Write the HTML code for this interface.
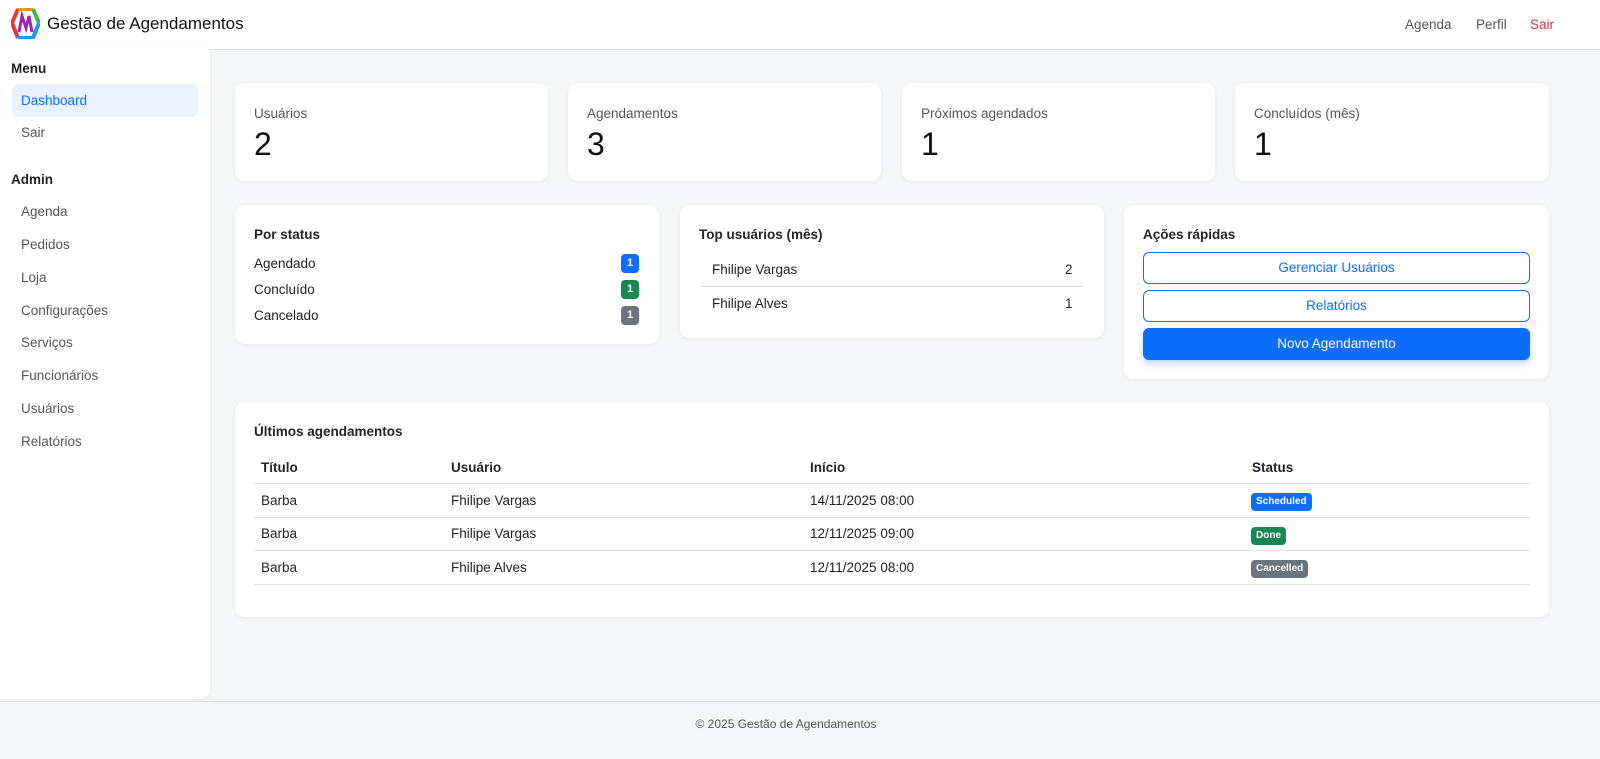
<!DOCTYPE html><html><head><meta charset="utf-8"><style>
*{box-sizing:border-box;margin:0;padding:0}
body{width:1600px;height:759px;background:#f5f6f8;font-family:"Liberation Sans",sans-serif;color:#212529;position:relative;overflow:hidden;font-size:13.5px}
.hdr{position:absolute;left:0;top:0;width:1600px;height:50px;background:#fff;border-bottom:1px solid #dee2e6}
.brand{position:absolute;left:47px;top:14px;font-size:17px;color:#111}
.nav{position:absolute;top:17px;font-size:13.5px;color:#555}
.side{position:absolute;left:0;top:44px;width:210px;height:655px;background:#fff;border-radius:0 10px 10px 0;box-shadow:0 1px 4px rgba(0,0,0,.06)}
.side h4{position:absolute;left:11px;font-size:13.5px;font-weight:bold;color:#222}
.side a{position:absolute;left:21px;font-size:13.5px;color:#555}
.act{position:absolute;left:12px;top:40px;width:186px;height:33px;background:#e7f1ff;border-radius:6px}
.card{position:absolute;background:#fff;border-radius:10px;box-shadow:0 1px 4px rgba(0,0,0,.06)}
.lbl{position:absolute;left:19px;top:23px;font-size:13.5px;color:#555}
.num{position:absolute;left:19px;top:43px;font-size:32px;color:#111}
.t{position:absolute;left:19px;top:22px;font-size:13.5px;font-weight:bold}
.row{position:absolute;left:19px;font-size:13.5px;color:#222}
.bd{position:absolute;width:18px;height:19px;border-radius:4px;color:#fff;font-size:11px;font-weight:bold;text-align:center;line-height:19px}
.btn{position:absolute;left:19px;width:387px;height:32px;border:1px solid #0d6efd;border-radius:6px;color:#0d6efd;text-align:center;line-height:30px;font-size:13.5px}
.th{position:absolute;top:58px;font-weight:bold;font-size:13.5px}
.td{position:absolute;font-size:13.5px;color:#222}
.hl{position:absolute;left:19px;width:1276px;height:1px;background:#dee2e6}
.sb{position:absolute;left:1016px;height:18px;border-radius:4px;color:#fff;font-size:10px;font-weight:bold;line-height:18px;padding:0 5px}
</style></head><body>
<div class="hdr">
<svg style="position:absolute;left:11px;top:8px" width="29" height="31" viewBox="0 0 29 31"><polygon points="7,1 22,1 28,15 22,30 7,30 1,15" fill="#fff" stroke="none"/><path d="M7 1 L1 15 L7 30" stroke="#e53935" stroke-width="4" fill="none"/><path d="M7 1 H22" stroke="#ff9800" stroke-width="4"/><path d="M22 1 L28 15" stroke="#4caf50" stroke-width="4"/><path d="M28 15 L22 30 H7" stroke="#2196f3" stroke-width="4" fill="none"/><path d="M8 24 L11 8 L15 20 L18 8 L21 24" stroke="#9c27b0" stroke-width="3" fill="none"/></svg>
<div class="brand">Gestão de Agendamentos</div>
<div class="nav" style="left:1405px">Agenda</div><div class="nav" style="left:1476px">Perfil</div><div class="nav" style="left:1530px;color:#dc3545">Sair</div>
</div>
<div class="side"><div class="act"></div>
<h4 style="top:17px">Menu</h4><a style="top:49px;color:#0d6efd">Dashboard</a><a style="top:81px">Sair</a>
<h4 style="top:128px">Admin</h4><a style="top:160px">Agenda</a><a style="top:193px">Pedidos</a><a style="top:226px">Loja</a><a style="top:259px">Configurações</a><a style="top:291px">Serviços</a><a style="top:324px">Funcionários</a><a style="top:357px">Usuários</a><a style="top:390px">Relatórios</a></div>
<div class="card" style="left:235px;top:83px;width:313px;height:98px"><div class="lbl">Usuários</div><div class="num">2</div></div>
<div class="card" style="left:568px;top:83px;width:313px;height:98px"><div class="lbl">Agendamentos</div><div class="num">3</div></div>
<div class="card" style="left:902px;top:83px;width:313px;height:98px"><div class="lbl">Próximos agendados</div><div class="num">1</div></div>
<div class="card" style="left:1235px;top:83px;width:314px;height:98px"><div class="lbl">Concluídos (mês)</div><div class="num">1</div></div>
<div class="card" style="left:235px;top:205px;width:424px;height:139px"><div class="t">Por status</div>
<div class="row" style="top:51px">Agendado</div><div class="bd" style="left:386px;top:49px;background:#0d6efd">1</div>
<div class="row" style="top:77px">Concluído</div><div class="bd" style="left:386px;top:75px;background:#198754">1</div>
<div class="row" style="top:103px">Cancelado</div><div class="bd" style="left:386px;top:101px;background:#6c757d">1</div></div>
<div class="card" style="left:680px;top:205px;width:424px;height:133px"><div class="t">Top usuários (mês)</div>
<div class="row" style="top:57px;left:32px">Fhilipe Vargas</div><div class="row" style="top:57px;left:385px">2</div>
<div style="position:absolute;left:19px;top:81px;width:386px;height:1px;background:#dee2e6"></div>
<div class="row" style="top:91px;left:32px">Fhilipe Alves</div><div class="row" style="top:91px;left:385px">1</div></div>
<div class="card" style="left:1124px;top:205px;width:425px;height:174px"><div class="t">Ações rápidas</div>
<div class="btn" style="top:47px">Gerenciar Usuários</div><div class="btn" style="top:85px">Relatórios</div>
<div class="btn" style="top:123px;background:#0d6efd;color:#fff;box-shadow:0 3px 8px rgba(13,110,253,.3)">Novo Agendamento</div></div>
<div class="card" style="left:235px;top:402px;width:1314px;height:215px"><div class="t">Últimos agendamentos</div>
<div class="th" style="left:26px">Título</div><div class="th" style="left:216px">Usuário</div><div class="th" style="left:575px">Início</div><div class="th" style="left:1017px">Status</div>
<div class="hl" style="top:81px"></div>
<div class="td" style="left:26px;top:91px">Barba</div><div class="td" style="left:216px;top:91px">Fhilipe Vargas</div><div class="td" style="left:575px;top:91px">14/11/2025 08:00</div><div class="sb" style="top:91px;background:#0d6efd">Scheduled</div>
<div class="hl" style="top:115px"></div>
<div class="td" style="left:26px;top:124px">Barba</div><div class="td" style="left:216px;top:124px">Fhilipe Vargas</div><div class="td" style="left:575px;top:124px">12/11/2025 09:00</div><div class="sb" style="top:125px;background:#198754">Done</div>
<div class="hl" style="top:148px"></div>
<div class="td" style="left:26px;top:158px">Barba</div><div class="td" style="left:216px;top:158px">Fhilipe Alves</div><div class="td" style="left:575px;top:158px">12/11/2025 08:00</div><div class="sb" style="top:158px;background:#6c757d">Cancelled</div>
<div class="hl" style="top:182px"></div></div>
<div style="position:absolute;left:0;top:701px;width:1600px;height:1px;background:#dee2e6"></div>
<div style="position:absolute;left:0;top:717px;width:1572px;text-align:center;font-size:12px;color:#555">© 2025 Gestão de Agendamentos</div>
</body></html>
